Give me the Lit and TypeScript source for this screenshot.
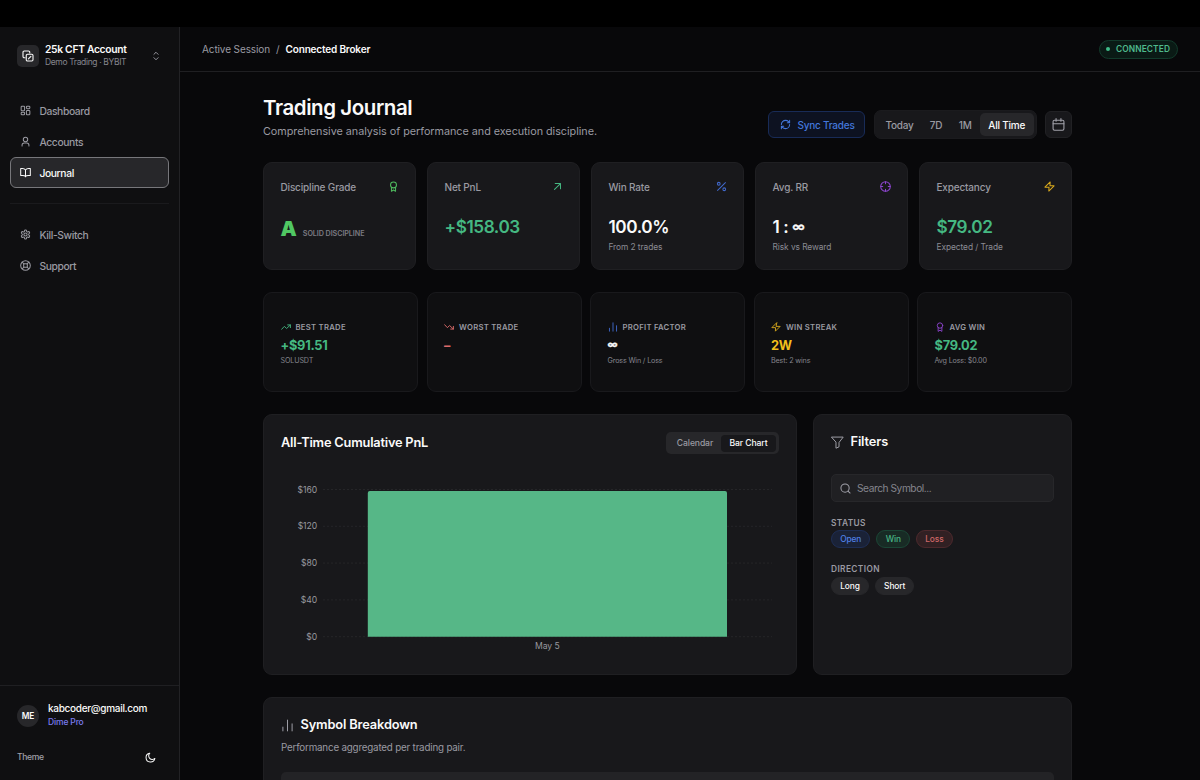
import { LitElement, html, css, svg } from "lit";
import { customElement, property } from "lit/decorators.js";

const ICONS: Record<string, unknown> = {
  copy: svg`<path d="M6 15.500H4.500A2.500 2.500 0 0 1 2 13V4.500A2.500 2.500 0 0 1 4.500 2H13a2.500 2.500 0 0 1 2.500 2.500V6"/><rect x="8.500" y="8.500" width="13.500" height="13.500" rx="2.500"/><path d="m12.800 17.700 5-5"/>`,
  updown: svg`<path d="m7 16 5 5 5-5M7 8l5-5 5 5"/>`,
  dashboard: svg`<rect x="2.500" y="2.500" width="7.500" height="10" rx="1.800"/><rect x="14" y="2.500" width="7.500" height="5.500" rx="1.800"/><rect x="14" y="12" width="7.500" height="9.500" rx="1.800"/><rect x="2.500" y="16" width="7.500" height="5.500" rx="1.800"/>`,
  user: svg`<circle cx="12" cy="7.500" r="4.800"/><path d="M4.500 22v-2a4.500 4.500 0 0 1 4.500-4.500h6a4.500 4.500 0 0 1 4.500 4.500v2"/>`,
  book: svg`<path d="M12 6.500V21M12 6.500C10.500 4.300 8 3.500 5 3.500H1.500V18.500H6c3 0 5 .7 6 2.500 1-1.800 3-2.500 6-2.500h4.500V3.500H19c-3 0-5.500.8-7 3Z"/>`,
  gear: svg`<path d="M12.220 2h-.44a2 2 0 0 0-2 2v.18a2 2 0 0 1-1 1.730l-.43.25a2 2 0 0 1-2 0l-.15-.08a2 2 0 0 0-2.730.73l-.22.38a2 2 0 0 0 .73 2.730l.15.1a2 2 0 0 1 1 1.720v.51a2 2 0 0 1-1 1.740l-.15.09a2 2 0 0 0-.73 2.730l.22.38a2 2 0 0 0 2.730.73l.15-.08a2 2 0 0 1 2 0l.43.25a2 2 0 0 1 1 1.730V20a2 2 0 0 0 2 2h.44a2 2 0 0 0 2-2v-.18a2 2 0 0 1 1-1.730l.43-.25a2 2 0 0 1 2 0l.15.08a2 2 0 0 0 2.730-.73l.22-.39a2 2 0 0 0-.73-2.730l-.15-.08a2 2 0 0 1-1-1.740v-.5a2 2 0 0 1 1-1.740l.15-.09a2 2 0 0 0 .73-2.730l-.22-.38a2 2 0 0 0-2.730-.73l-.15.08a2 2 0 0 1-2 0l-.43-.25a2 2 0 0 1-1-1.730V4a2 2 0 0 0-2-2z"/><circle cx="12" cy="12" r="3.500"/>`,
  support: svg`<circle cx="12" cy="12" r="10.500"/><rect x="8" y="8" width="8" height="8" rx="2"/><path d="m4.800 4.800 3.700 3.700M19.200 4.800l-3.700 3.700M4.800 19.200l3.700-3.700M19.200 19.200l-3.700-3.700"/>`,
  moon: svg`<path d="M21.500 14A9.700 9.700 0 1 1 10.500 2.500a7.300 7.300 0 0 0 11 11.500Z"/>`,
  sync: svg`<path d="M3 12a9 9 0 0 1 9-9 9.750 9.750 0 0 1 6.740 2.740L21 8M21 3v5h-5M21 12a9 9 0 0 1-9 9 9.750 9.750 0 0 1-6.740-2.740L3 16M8 16H3v5"/>`,
  calendar: svg`<rect x="2" y="4" width="20" height="18.500" rx="2.500"/><path d="M7.500 1v5M16.500 1v5M2 10.500h20"/>`,
  award: svg`<circle cx="12" cy="8.500" r="6.500"/><path d="M7.500 13.500V22.500l4.500-2.800 4.500 2.800v-9"/>`,
  arrow: svg`<path d="M5.500 18.500 18.500 5.500M7 5.500h11.500V17"/>`,
  percent: svg`<path d="M20.500 3.500 3.500 20.500"/><circle cx="6" cy="6" r="3"/><circle cx="18" cy="18" r="3"/>`,
  crosshair: svg`<circle cx="12" cy="12" r="10.500"/><path d="M22.500 12h-4.500M6 12H1.500M12 6V1.500M12 22.500V18"/>`,
  zap: svg`<path d="M13.500 2 2 13.500h9l-.500 8.500L22 10.500H13Z"/>`,
  up: svg`<path d="m1.500 17.500 6.500-7 5.500 5L22.500 7M16 7h6.500v6.500"/>`,
  down: svg`<path d="m1.500 6.500 6.500 7 5.500-5L22.500 17M16 17h6.500v-6.500"/>`,
  bars: svg`<path d="M3.500 22v-7M12 22V2M20.500 22V9"/>`,
  funnel: svg`<path d="M1.500 2h21l-7.700 10v8l-5.600 2.500V12Z"/>`,
  search: svg`<circle cx="11" cy="11" r="9"/><path d="m22 22-4.500-4.500"/>`,
};

@customElement("ui-icon")
class UiIcon extends LitElement {
  @property() name = "";
  @property({ type: Number }) size = 12;
  @property({ type: Number }) weight = 2.2;
  static styles = css`
    :host { display: inline-flex; flex: none; }
    svg { display: block; fill: none; stroke: currentColor; stroke-linecap: round; stroke-linejoin: round; }
  `;
  render() {
    return html`<svg width=${this.size} height=${this.size} viewBox="0 0 24 24" stroke-width=${this.weight}>${ICONS[this.name]}</svg>`;
  }
}

@customElement("pnl-chart")
class PnlChart extends LitElement {
  static styles = css`
    :host { display: block; }
    svg { display: block; }
    text { font: 400 8.6px Inter, sans-serif; fill: #98989f; letter-spacing: -0.08px; }
    .grid { stroke: #252528; stroke-dasharray: 2 2; }
    .bar { fill: #56b787; }
  `;
  render() {
    const ticks = [160, 120, 80, 40, 0];
    return html`<svg width="498" height="180" viewBox="281 480 498 180">
      ${ticks.map((v, i) => {
        const y = 489.5 + i * 36.8;
        return svg`<line class="grid" x1="323" x2="772" y1=${y} y2=${y}></line><text x="317" y=${y + 3.1} text-anchor="end">$${v}</text>`;
      })}
      <path class="bar" d="M367.800 636.700V493a2 2 0 0 1 2-2H725a2 2 0 0 1 2 2V636.700Z"></path>
      <text x="547.300" y="648.600" text-anchor="middle">May 5</text>
    </svg>`;
  }
}

const NAV = [
  ["dashboard", "Dashboard"],
  ["user", "Accounts"],
  ["book", "Journal"],
];
const INF = html`<span class="inf">∞</span>`;
const KPIS = [
  { title: "Net PnL", icon: "arrow", tone: "green", value: "+$158.03", vt: "green", sub: "" },
  { title: "Win Rate", icon: "percent", tone: "blue", value: "100.0%", vt: "white", sub: "From 2 trades" },
  { title: "Avg. RR", icon: "crosshair", tone: "purple", value: html`1 : ${INF}`, vt: "white", sub: "Risk vs Reward" },
  { title: "Expectancy", icon: "zap", tone: "yellow", value: "$79.02", vt: "green", sub: "Expected / Trade" },
];
const STATS = [
  { label: "BEST TRADE", icon: "up", tone: "green", value: "+$91.51", vt: "green", sub: "SOLUSDT" },
  { label: "WORST TRADE", icon: "down", tone: "red", value: "–", vt: "red", sub: "" },
  { label: "PROFIT FACTOR", icon: "bars", tone: "blue", value: INF, vt: "white", sub: "Gross Win / Loss" },
  { label: "WIN STREAK", icon: "zap", tone: "yellow", value: "2W", vt: "gold", sub: "Best: 2 wins" },
  { label: "AVG WIN", icon: "award", tone: "purple", value: "$79.02", vt: "green", sub: "Avg Loss: $0.00" },
];

@customElement("app-root")
class AppRoot extends LitElement {
  static styles = css`
    :host { display: block; height: 780px; overflow: hidden; background: #000; color: #fafafa; font-family: Inter, "Liberation Sans", sans-serif; font-size: 10px; }
    * { box-sizing: border-box; }
    .app { display: flex; height: 780px; padding-top: 27px; white-space: nowrap; }
    .side { width: 180px; flex: none; background: #0f0f11; border-right: 1px solid #222225; display: flex; flex-direction: column; }
    .account { display: flex; align-items: center; height: 58px; padding: 0 18px 0 17px; }
    .acc-icon { width: 22px; height: 22px; border-radius: 5px; background: #27272a; display: flex; align-items: center; justify-content: center; }
    .acc-text { flex: 1; margin-left: 6px; }
    .acc-name { font-size: 10.3px; font-weight: 600; line-height: 13px; letter-spacing: -0.31px; }
    .acc-sub { font-size: 8.5px; line-height: 13px; color: #85858d; letter-spacing: -0.36px; }
    .updown { color: #a1a1aa; }
    nav { padding: 10px 10px 0; display: flex; flex-direction: column; }
    .item { height: 31px; display: flex; align-items: center; gap: 8px; padding: 0 10px 0 9.400px; border: 1px solid transparent; border-radius: 6px; color: #9a9aa2; font-size: 10.300px; font-weight: 500; letter-spacing: -0.37px; }
    .item.on { background: #27272a; border: 1px solid #77777b; color: #fafafa; }
    .rule { height: 1px; background: #1a1a1d; margin: 15px 0; }
    .foot { margin-top: auto; border-top: 1px solid #1f1f22; height: 95px; padding: 13px 17px 0; }
    .who { display: flex; align-items: center; gap: 9px; height: 31px; }
    .avatar { width: 22px; height: 22px; border-radius: 50%; background: #27272a; display: flex; align-items: center; justify-content: center; font-size: 8.3px; font-weight: 600; margin-top: 3px; }
    .mail { font-size: 10px; font-weight: 500; line-height: 15px; letter-spacing: -0.3px; }
    .plan { font-size: 8.5px; font-weight: 500; line-height: 13px; color: #7a7cf0; letter-spacing: -0.15px; }
    .theme { display: flex; justify-content: space-between; align-items: center; padding: 0 6px 0 0; margin-top: 20px; height: 14px; font-size: 8.6px; font-weight: 500; letter-spacing: -0.38px; color: #a1a1aa; }
    .theme ui-icon { color: #fafafa; }
    .main { flex: 1; min-width: 0; background: #08080a; display: flex; flex-direction: column; overflow: hidden; }
    .top { height: 45px; flex: none; border-bottom: 1px solid #1f1f22; padding: 0 22.500px 0 22px; display: flex; align-items: center; font-size: 10px; }
    .crumb { color: #9a9aa2; letter-spacing: -0.11px; }
    .slash { color: #9a9aa2; margin: 0 6px; }
    .crumb-on { font-weight: 600; letter-spacing: -0.17px; }
    .badge { margin-left: auto; width: 79px; height: 19px; border-radius: 10px; border: 1px solid #123a2b; background: #0a1a15; color: #4fb98c; display: flex; align-items: center; justify-content: center; gap: 6px; font-size: 8.400px; font-weight: 600; letter-spacing: 0.1px; }
    .dot { width: 4px; height: 4px; border-radius: 50%; background: #3fbd8a; }
    .page { width: 809px; margin-left: 83px; padding-top: 24px; flex: none; }
    .head { display: flex; align-items: flex-start; height: 66px; }
    .h1 { font-size: 20.500px; font-weight: 600; line-height: 24px; letter-spacing: -0.43px; }
    .lead { font-size: 10.8px; line-height: 16px; margin-top: 4px; color: #9a9aa2; letter-spacing: -0.03px; }
    .tools { margin-left: auto; margin-top: 14px; display: flex; align-items: center; gap: 8.500px; font-size: 10px; font-weight: 500; letter-spacing: -0.22px; }
    .sync { width: 97px; height: 27px; border-radius: 6px; border: 1px solid #182b57; background: #0d1221; color: #4377db; display: flex; align-items: center; justify-content: center; gap: 6px; padding-left: 2px; }
    .range { width: 163px; height: 29px; border-radius: 7px; background: #18181b; border: 1px solid #1b1b1e; display: flex; align-items: center; padding: 0 2px 0 3px; color: #9a9aa2; }
    .range span { display: flex; align-items: center; justify-content: center; height: 23px; border-radius: 5px; }
    .range .r0 { width: 44px; } .range .r1 { width: 29px; } .range .r2 { width: 29.500px; }
    .range .r3 { flex: 1; background: #27272a; color: #fafafa; }
    .cal { width: 27px; height: 27px; border-radius: 6px; background: #18181b; border: 1px solid #212124; color: #a1a1aa; display: flex; align-items: center; justify-content: center; }
    .kpis { display: grid; grid-template-columns: repeat(5, 1fr); gap: 11px; }
    .card { background: #18181b; border: 1px solid #1f1f22; border-radius: 9px; }
    .kpi { height: 108px; padding: 15px 16.500px 0 16.500px; }
    .kpi-top { display: flex; justify-content: space-between; align-items: center; height: 17px; font-size: 10px; font-weight: 500; color: #9a9aa2; letter-spacing: -0.17px; }
    .kpi-val { font-size: 17.200px; font-weight: 600; line-height: 24px; margin-top: 20px; letter-spacing: -0.42px; }
    .kpi-sub { font-size: 8.4px; line-height: 13px; margin-top: 1.500px; color: #8b8b93; letter-spacing: -0.08px; }
    .inf { display: inline-block; font-size: 0.75em; line-height: 1; vertical-align: 0.14em; -webkit-text-stroke: 0.3px currentColor; }
    .grade { display: flex; align-items: baseline; gap: 6px; margin-top: 22px; line-height: 24px; }
    .letter { font-size: 20.500px; font-weight: 900; color: #50c763; }
    .solid { font-size: 7.200px; font-weight: 600; color: #7b7b82; letter-spacing: -0.08px; }
    .stats { display: grid; grid-template-columns: repeat(5, 1fr); gap: 8.500px; margin-top: 22px; }
    .stat { height: 100px; background: #0f0f11; border: 1px solid #19191c; border-radius: 9px; padding: 27px 16.500px 0; }
    .stat-top { display: flex; align-items: center; gap: 5px; height: 14px; font-size: 7.700px; font-weight: 600; letter-spacing: 0.27px; color: #9a9aa2; }
    .stat-val { height: 18px; font-size: 12.800px; font-weight: 700; line-height: 18px; margin-top: 3px; letter-spacing: -0.25px; }
    .stat-val .inf { font-size: 0.8em; vertical-align: 0.2em; }
    .stat-sub { font-size: 7.200px; line-height: 12px; margin-top: 0; color: #85858d; letter-spacing: -0.16px; }
    .green { color: #45b882; } .blue { color: #4169cc; } .purple { color: #8d45cf; } .yellow { color: #d9a91d; } .gold { color: #f2bf1b; } .red { color: #dd6b6b; } .white { color: #fafafa; } .lime { color: #4fbb5f; }
    .panels { display: grid; grid-template-columns: 534px 259px; gap: 16px; margin-top: 22px; }
    .panel { height: 261px; padding: 16px 17px 0; }
    .panel-top { display: flex; align-items: center; justify-content: space-between; height: 24px; }
    .h2 { font-size: 12.800px; font-weight: 600; line-height: 20px; letter-spacing: -0.2px; }
    .toggle { width: 113px; height: 22px; border-radius: 5px; background: #27272a; display: flex; align-items: center; padding: 0 3px 0 0; font-size: 8.600px; font-weight: 500; letter-spacing: -0.1px; color: #9a9aa2; }
    .toggle span { height: 17px; display: flex; align-items: center; justify-content: center; border-radius: 4px; }
    .t0 { width: 55px; padding-left: 3px; } .toggle .t1 { flex: 1; background: #18181b; color: #fafafa; }
    pnl-chart { margin-top: 25px; }
    .title-row { display: flex; align-items: center; gap: 6.500px; height: 22px; color: #a1a1aa; }
    .title-row .h2 { color: #fafafa; letter-spacing: -0.13px; }
    .search { margin-top: 21px; height: 28px; border-radius: 5px; background: #202023; border: 1px solid #27272a; display: flex; align-items: center; gap: 6px; padding: 0 8px; font-size: 10.200px; letter-spacing: -0.45px; color: #85858d; }
    .search ui-icon { color: #a1a1aa; }
    .label { font-size: 8.300px; font-weight: 600; letter-spacing: 0.4px; line-height: 12px; color: #9a9aa2; }
    .l1 { margin-top: 15px; } .l2 { margin-top: 15px; }
    .pills { display: flex; gap: 6px; margin-top: 2px; }
    .l1 + .pills { margin-top: 1px; }
    .pill { height: 18px; border-radius: 9px; padding: 0 8.200px; border: 1px solid #27272a; display: flex; align-items: center; background: #27272a; font-size: 8.400px; font-weight: 500; letter-spacing: -0.12px; }
    .pill.b { background: #1a2237; border-color: #1e2e55; color: #4f80e6; }
    .pill.g { background: #182b25; border-color: #1b4636; color: #49b585; }
    .pill.r { background: #312023; border-color: #4d292d; color: #d06868; }
    .symbols { margin-top: 22px; height: 200px; padding: 16px 17px 0; }
    .muted { font-size: 9.800px; line-height: 16px; color: #9a9aa2; margin-top: 4px; letter-spacing: -0.19px; }
    .strip { margin-top: 16px; height: 40px; border-radius: 5px; background: #232326; }
  `;

  render() {
    return html`<div class="app">
      <aside class="side">
        <div class="account">
          <div class="acc-icon"><ui-icon name="copy" size="12"></ui-icon></div>
          <div class="acc-text"><div class="acc-name">25k CFT Account</div><div class="acc-sub">Demo Trading · BYBIT</div></div>
          <ui-icon class="updown" name="updown" size="10"></ui-icon>
        </div>
        <nav>
          ${NAV.map(([i, t]) => html`<div class="item ${t === "Journal" ? "on" : ""}"><ui-icon name=${i} size="11"></ui-icon>${t}</div>`)}
          <div class="rule"></div>
          <div class="item"><ui-icon name="gear" size="11"></ui-icon>Kill-Switch</div>
          <div class="item"><ui-icon name="support" size="11"></ui-icon>Support</div>
        </nav>
        <div class="foot">
          <div class="who"><div class="avatar">ME</div><div><div class="mail">kabcoder@gmail.com</div><div class="plan">Dime Pro</div></div></div>
          <div class="theme">Theme<ui-icon name="moon" size="11"></ui-icon></div>
        </div>
      </aside>
      <div class="main">
        <div class="top">
          <span class="crumb">Active Session</span><span class="slash">/</span><span class="crumb-on">Connected Broker</span>
          <div class="badge"><span class="dot"></span>CONNECTED</div>
        </div>
        <div class="page">
          <div class="head">
            <div><div class="h1">Trading Journal</div><div class="lead">Comprehensive analysis of performance and execution discipline.</div></div>
            <div class="tools">
              <div class="sync"><ui-icon name="sync" size="11"></ui-icon>Sync Trades</div>
              <div class="range"><span class="r0">Today</span><span class="r1">7D</span><span class="r2">1M</span><span class="r3">All Time</span></div>
              <div class="cal"><ui-icon name="calendar" size="13" weight="2"></ui-icon></div>
            </div>
          </div>
          <div class="kpis">
            <div class="card kpi">
              <div class="kpi-top">Discipline Grade<ui-icon class="lime" name="award" size="11"></ui-icon></div>
              <div class="grade"><span class="letter">A</span><span class="solid">SOLID DISCIPLINE</span></div>
            </div>
            ${KPIS.map((k) => html`<div class="card kpi">
              <div class="kpi-top">${k.title}<ui-icon class=${k.tone} name=${k.icon} size="11"></ui-icon></div>
              <div class="kpi-val ${k.vt}">${k.value}</div><div class="kpi-sub">${k.sub}</div>
            </div>`)}
          </div>
          <div class="stats">
            ${STATS.map((s) => html`<div class="stat">
              <div class="stat-top"><ui-icon class=${s.tone} name=${s.icon} size="10"></ui-icon>${s.label}</div>
              <div class="stat-val ${s.vt}">${s.value}</div><div class="stat-sub">${s.sub}</div>
            </div>`)}
          </div>
          <div class="panels">
            <div class="card panel">
              <div class="panel-top"><div class="h2">All-Time Cumulative PnL</div><div class="toggle"><span class="t0">Calendar</span><span class="t1">Bar Chart</span></div></div>
              <pnl-chart></pnl-chart>
            </div>
            <div class="card panel">
              <div class="title-row"><ui-icon name="funnel" size="13" weight="1.8"></ui-icon><span class="h2">Filters</span></div>
              <div class="search"><ui-icon name="search" size="11"></ui-icon>Search Symbol...</div>
              <div class="label l1">STATUS</div>
              <div class="pills"><span class="pill b">Open</span><span class="pill g">Win</span><span class="pill r">Loss</span></div>
              <div class="label l2">DIRECTION</div>
              <div class="pills"><span class="pill">Long</span><span class="pill">Short</span></div>
            </div>
          </div>
          <div class="card symbols">
            <div class="title-row"><ui-icon name="bars" size="13" weight="1.8"></ui-icon><span class="h2">Symbol Breakdown</span></div>
            <div class="muted">Performance aggregated per trading pair.</div>
            <div class="strip"></div>
          </div>
        </div>
      </div>
    </div>`;
  }
}
